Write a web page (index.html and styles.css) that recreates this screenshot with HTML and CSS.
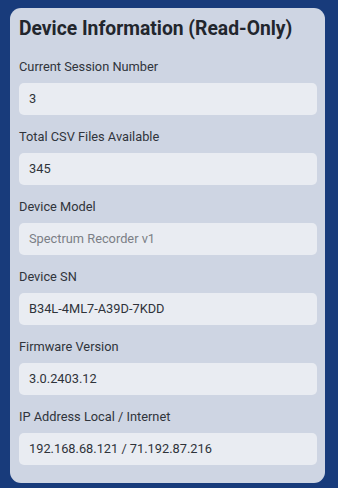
FILE: index.html
```html
<!DOCTYPE html>
<html>
<head>
<meta charset="utf-8">
<link rel="stylesheet" href="styles.css">
</head>
<body>
<div class="page">
  <section class="card">
    <h2 class="title">Device Information (Read-Only)</h2>
    <div class="fields">
      <div class="field">
        <label class="label">Current Session Number</label>
        <div class="input">3</div>
      </div>
      <div class="field">
        <label class="label">Total CSV Files Available</label>
        <div class="input">345</div>
      </div>
      <div class="field">
        <label class="label">Device Model</label>
        <div class="input muted">Spectrum Recorder v1</div>
      </div>
      <div class="field">
        <label class="label">Device SN</label>
        <div class="input">B34L-4ML7-A39D-7KDD</div>
      </div>
      <div class="field">
        <label class="label">Firmware Version</label>
        <div class="input">3.0.2403.12</div>
      </div>
      <div class="field">
        <label class="label">IP Address Local / Internet</label>
        <div class="input">192.168.68.121 / 71.192.87.216</div>
      </div>
    </div>
  </section>
</div>
</body>
</html>
```
FILE: styles.css
```css
html, body {
  margin: 0;
  padding: 0;
}
body {
  background: #183b7b;
  font-family: Roboto, "Liberation Sans", sans-serif;
  width: 338px;
  height: 488px;
  overflow: hidden;
}
.page {
  padding: 8px 13px 5px 10px;
}
.card {
  background: #ced5e3;
  border-radius: 11px;
  padding: 9px 8px 19px 9px;
  height: 475px;
  box-sizing: border-box;
}
.title {
  margin: 0;
  font-size: 19.3px;
  line-height: 24px;
  font-weight: 700;
  color: #22262d;
}
.fields {
  margin-top: 17.5px;
  display: flex;
  flex-direction: column;
  gap: 14px;
}
.field {
  display: flex;
  flex-direction: column;
  gap: 8px;
}
.label {
  font-size: 12.8px;
  line-height: 16px;
  color: #30343b;
}
.input {
  height: 32px;
  box-sizing: border-box;
  background: #e9ecf2;
  border-radius: 5px;
  padding: 0 10px;
  display: flex;
  align-items: center;
  font-size: 12.8px;
  color: #2f333a;
}
.input.muted {
  color: #7b7f86;
}
```
